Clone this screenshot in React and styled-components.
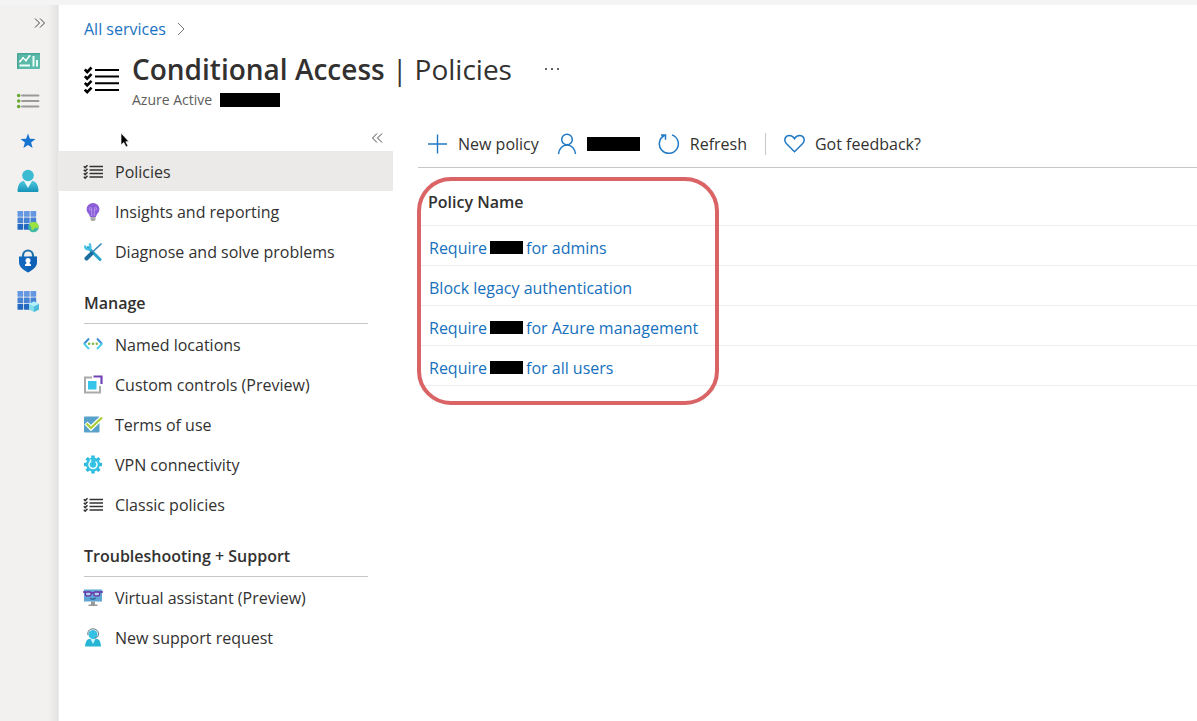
import React from "react";
import styled, { createGlobalStyle } from "styled-components";

const GlobalStyle = createGlobalStyle`
  *, *::before, *::after { box-sizing: border-box; }
  body {
    margin: 0;
    background: #fff;
    color: #323130;
    font-family: "Open Sans", "Noto Sans", sans-serif;
    font-size: 16px;
    line-height: 24px;
  }
  button {
    margin: 0;
    padding: 0;
    border: 0;
    background: none;
    color: inherit;
    font: inherit;
    cursor: pointer;
  }
  a { color: inherit; text-decoration: none; }
  ul { list-style: none; margin: 0; padding: 0; }
  svg { display: block; flex: none; }
`;

const Page = styled.div`
  display: grid;
  grid-template-columns: 59px minmax(0, 1fr);
  min-height: 100vh;
  border-top: 5px solid #f4f4f4;
`;

const Rail = styled.nav`
  display: flex;
  flex-direction: column;
  align-items: center;
  padding: 8px 3px 0 0;
  background: linear-gradient(to right, #f2f1f0 48px, #e4e3e2 58px, #f4f4f4 59px);
`;

const RailToggle = styled.button`
  display: grid;
  place-items: center;
  align-self: flex-end;
  width: 32px;
  height: 20px;
`;

const RailList = styled.ul`
  display: flex;
  flex-direction: column;
  padding-top: 8px;
`;

const RailLink = styled.a`
  display: grid;
  place-items: center;
  width: 40px;
  height: 40px;
`;

const Blade = styled.main`
  min-width: 0;
`;

const Breadcrumb = styled.nav`
  display: flex;
  align-items: center;
  gap: 10px;
  padding: 12px 24px 0 25px;
  color: #1a73c2;
`;

const Header = styled.header`
  display: flex;
  gap: 12px;
  padding: 8px 24px 0 25px;
`;

const HeaderIcon = styled.div`
  padding-top: 13px;
`;

const TitleRow = styled.div`
  display: flex;
  align-items: center;
  gap: 32px;
`;

const Title = styled.h1`
  margin: 0;
  font-size: 28px;
  line-height: 40px;
  font-weight: 400;
  white-space: nowrap;

  strong { font-weight: 600; }
`;

const Subtitle = styled.p`
  display: flex;
  align-items: center;
  gap: 8px;
  margin: 0;
  font-size: 14px;
  line-height: 22px;
  color: #605e5c;
`;

const Redacted = styled.span`
  display: inline-block;
  width: ${(p) => p.$width}px;
  height: ${(p) => p.$height || 14}px;
  background: #000;
`;

const Body = styled.div`
  display: grid;
  grid-template-columns: 334px minmax(0, 1fr);
  column-gap: 25px;
  padding-top: 14px;
`;

const Sidebar = styled.aside`
  min-width: 0;
`;

const CollapseRow = styled.div`
  display: flex;
  justify-content: flex-end;
  height: 26px;
  padding-right: 6px;
`;

const CollapseButton = styled.button`
  display: grid;
  place-items: center;
  width: 20px;
  height: 26px;
`;

const MenuLink = styled.a`
  display: flex;
  align-items: center;
  gap: 12px;
  height: 40px;
  padding: 2px 12px 0 24px;
  background: ${(p) => (p.$active ? "#ebeae8" : "transparent")};
  white-space: nowrap;
`;

const GroupTitle = styled.h2`
  margin: 20px 25px 0;
  padding-bottom: 8px;
  border-bottom: 1px solid #c8c6c4;
  font-size: 16px;
  line-height: 24px;
  font-weight: 600;
`;

const Content = styled.section`
  min-width: 0;
`;

const Toolbar = styled.div`
  display: flex;
  align-items: center;
  height: 43px;
  padding: 0 0 5px 9px;
  border-bottom: 1px solid #c8c6c4;
  gap: 18px;
`;

const ToolButton = styled.button`
  display: flex;
  align-items: center;
  gap: 10px;
  white-space: nowrap;
`;

const Divider = styled.span`
  width: 1px;
  height: 22px;
  background: #c8c6c4;
`;

const TableWrap = styled.div`
  position: relative;
  padding-top: 11px;
`;

const PolicyTable = styled.table`
  width: 100%;
  border-collapse: collapse;
  text-align: left;

  th, td {
    height: 40px;
    padding: 5px 10px 0 11px;
    border-bottom: 1px solid #efeeed;
  }
  th {
    height: 46px;
    padding: 0 10px;
    font-weight: 600;
  }
`;

const PolicyLink = styled.a`
  display: flex;
  align-items: center;
  gap: 3px;
  color: #1670bd;
  white-space: nowrap;
`;

const Highlight = styled.div`
  position: absolute;
  top: 9px;
  bottom: -19px;
  left: -1px;
  width: 302px;
  border: 4px solid #d96365;
  border-radius: 34px;
  pointer-events: none;
`;

const Pointer = styled.svg`
  position: absolute;
  top: 132px;
  left: 120px;
`;

const Chevrons = ({ left }) => (
  <svg width="12" height="12" viewBox="0 0 12 12" fill="none" stroke="#484644" strokeWidth="1">
    {left ? <path d="M6 1.5 1.5 6 6 10.5M11 1.5 6.5 6 11 10.5" /> : <path d="M1 1.5 5.5 6 1 10.5M6 1.5 10.5 6 6 10.5" />}
  </svg>
);

const ChecklistLargeIcon = () => (
  <svg width="36" height="36" viewBox="0 0 36 36" fill="none" stroke="#000">
    <path strokeWidth="2" d="M11 8h24M11 14.600h24M11 21.300h24M11 28h24" />
    <path strokeWidth="2.600" d="m.8 7.500 2.400 2.500 4.300-4.500M.8 14.200l2.400 2.500 4.300-4.500M.8 20.900l2.400 2.500 4.300-4.500M.8 27.600l2.400 2.500 4.300-4.500" />
  </svg>
);

const ChecklistIcon = () => (
  <svg width="20" height="20" viewBox="0 0 20 20" fill="none" stroke="#333">
    <path strokeWidth="1.300" d="M6.500 4.500h13.500M6.500 8h13.500M6.500 11.500h13.500M6.500 15h13.500" />
    <path strokeWidth="1.500" d="m.8 4.200 1.400 1.400 2.300-2.300M.8 7.700l1.400 1.400 2.300-2.300M.8 11.200l1.400 1.400 2.300-2.300M.8 14.700l1.400 1.400 2.300-2.300" />
  </svg>
);

const DashboardIcon = () => (
  <svg width="24" height="18" viewBox="0 0 24 18">
    <rect x="1" y="1" width="23" height="16" rx="1" fill="#5bb9a9" />
    <path d="M1 17V2l1-1h22v1.500H2.500V17z" fill="#48a698" />
    <path d="m4 9.500 3-3.500 3 2.500L13.500 4" fill="none" stroke="#fff" strokeWidth="1.300" />
    <circle cx="4" cy="9.500" r="1" fill="#fff" /><circle cx="7" cy="6" r="1" fill="#fff" /><circle cx="10" cy="8.500" r="1" fill="#fff" /><circle cx="13.500" cy="4" r="1" fill="#fff" />
    <path d="M3.500 13.500H14M17.500 4v10.500M21 8v6.500" stroke="#eafffa" strokeWidth="2" />
  </svg>
);

const ListIcon = () => (
  <svg width="24" height="18" viewBox="0 0 24 18">
    <path d="M6 3.500h16.500M6 9h16.500M6 14.500h16.500" stroke="#999" strokeWidth="1.800" strokeLinecap="round" />
    <g fill="#6ba82e"><circle cx="2.700" cy="3.500" r="1.800" /><circle cx="2.700" cy="9" r="1.800" /><circle cx="2.700" cy="14.500" r="1.800" /></g>
  </svg>
);

const StarIcon = () => (
  <svg width="16" height="16" viewBox="0 0 16 16"><path fill="#1673cf" d="m8 .5 1.900 5.300 5.600.2-4.400 3.500 1.500 5.500L8 11.900 3.400 15l1.500-5.500L.5 6l5.600-.2z" /></svg>
);

const PersonIcon = () => (
  <svg width="22" height="24" viewBox="0 0 22 24">
    <defs><linearGradient id="person" x2="0" y2="1"><stop stopColor="#50c8de" /><stop offset="1" stopColor="#1593b7" /></linearGradient></defs>
    <path fill="url(#person)" d="M.5 21.500c.2-5 2.200-9.200 6-9.500h9c3.800.3 5.800 4.500 6 9.500 0 1-.6 1.500-1.500 1.500H2c-.9 0-1.500-.5-1.500-1.500" />
    <path fill="#eefafd" d="M7 12h8l-4 7z" />
    <circle cx="11" cy="6.500" r="5.800" fill="#3cbad2" />
  </svg>
);

const GridIcon = ({ cube }) => (
  <svg width="22" height="23" viewBox="0 0 22 23">
    {[0, 1, 2].map((r) => [0, 1, 2].map((c) => (
      <rect key={`${r}${c}`} x={c * 6.5 + 0.5} y={r * 6.5 + 1} width="5.700" height="5.700" rx=".4" fill={["#6598e0", "#4683d3", "#2369bf"][r]} />
    )))}
    {cube ? (
      <g><path fill="#83dcee" d="m17 11.500 5 2.500v5.500L17 22l-5-2.500V14z" /><path fill="#b4f0fa" d="m17 11.500 5 2.500-5 2.500-5-2.500z" /><path fill="#4dbbd9" d="M17 16.500 22 14v5.500L17 22z" /></g>
    ) : (
      <g><circle cx="16.500" cy="17" r="5.300" fill="#43b8a4" /><path fill="#9de33f" d="M14 12.500c3-1 6-.3 7.300 2.500.9 2.500-1 4-2.800 2.500-1.500.5-1.500 3.500-4 2-.5-2 .5-2.500-1-3.500-1.500-1-1-2.500.5-3.500" /></g>
    )}
  </svg>
);

const ShieldLockIcon = () => (
  <svg width="20" height="24" viewBox="0 0 20 24">
    <path d="M5 8V6.500a5 5 0 0 1 10 0V8" fill="none" stroke="#2173ac" strokeWidth="2.200" />
    <path fill="#1268bd" d="M1 7.500h18v5.500c0 5.500-5.500 8.500-9 10.500-3.500-2-9-5-9-10.500z" />
    <path fill="#0b55a8" d="M10 7.500h9v5.500c0 5.500-5.500 8.500-9 10.500z" opacity=".35" />
    <circle cx="10" cy="11.500" r="2.500" fill="#fff" /><path fill="#fff" d="M8.800 12h2.400v2l1.800 1.500V17H7v-1.500L8.800 14z" />
  </svg>
);

const BulbIcon = () => (
  <svg width="20" height="20" viewBox="0 0 20 20">
    <path fill="#8b5dd8" d="M10 1a6.300 6.300 0 0 0-6.400 6.200c0 3.500 3 4.600 3.400 7.800h6c.4-3.200 3.400-4.300 3.400-7.800A6.300 6.300 0 0 0 10 1" />
    <path fill="none" stroke="#b996ee" strokeWidth="1" d="M8.700 14V8M11.300 14V8M8.700 8H7.500a1.200 1.200 0 1 1 1.200-1.200zM11.300 8h1.200a1.200 1.200 0 1 0-1.200-1.200z" />
    <path fill="#aaa" d="M7.500 15h5v2.500L11.500 19h-3l-1-1.500z" />
  </svg>
);

const ToolsIcon = () => (
  <svg width="20" height="20" viewBox="0 0 20 20" fill="none">
    <path d="m5 5.500 12 12" stroke="#28a4cd" strokeWidth="3" strokeLinecap="round" />
    <path d="M2 3.500c0 2.500 1 4 3.500 4S8 5 6.500 1.500" stroke="#42c2e3" strokeWidth="2.200" />
    <path d="M18 2 9 10.500" stroke="#3a88b8" strokeWidth="1.700" strokeLinecap="round" />
    <path d="m8.500 11.500-5 5" stroke="#1b6e9f" strokeWidth="4" strokeLinecap="round" />
  </svg>
);

const LocationsIcon = () => (
  <svg width="20" height="20" viewBox="0 0 20 20" fill="none" strokeWidth="2">
    <path d="M6 3.500.9 9M14 3.500 19.100 9" stroke="#3b8fd4" /><path d="M.9 8.500 6 14M19.100 8.500 14 14" stroke="#4fd0ed" />
    <g fill="#83b944"><circle cx="6.200" cy="8.800" r="1.300" /><circle cx="10" cy="8.800" r="1.300" /><circle cx="13.800" cy="8.800" r="1.300" /></g>
  </svg>
);

const ControlsIcon = () => (
  <svg width="20" height="20" viewBox="0 0 20 20" fill="none">
    <path d="M9 2.500H2v15h15V11" stroke="#aaa" strokeWidth="2" /><rect x="5" y="6" width="8.500" height="8.500" fill="#36c5e8" />
    <path d="M10.500 1.500h8V9" stroke="#7344b8" strokeWidth="2.200" />
  </svg>
);

const TermsIcon = () => (
  <svg width="20" height="20" viewBox="0 0 20 20" fill="none">
    <rect x="1" y="1.500" width="15.500" height="16" rx="1" fill="#58a2c9" /><path d="m3 8 5 5L19 2.500" stroke="#fff" strokeWidth="4.500" /><path d="m3.500 8.500 4.500 4.500L19 2.500" stroke="#a8cf37" strokeWidth="2.300" />
  </svg>
);

const GearIcon = () => (
  <svg width="20" height="20" viewBox="0 0 20 20" fill="none">
    <g stroke="#2bb8df" strokeWidth="3.400">{[0, 45, 90, 135].map((a) => <path key={a} d="M10 .5v18" transform={`rotate(${a} 10 9.500)`} />)}</g>
    <circle cx="10" cy="9.500" r="7" fill="#34c1e3" /><path d="M7.500 6.500a4 4 0 1 0 5 0M7.500 4.500v3" stroke="#effcff" strokeWidth="1.500" />
  </svg>
);

const AssistantIcon = () => (
  <svg width="20" height="20" viewBox="0 0 20 20" fill="none">
    <rect x="1" y="1.500" width="18" height="12" fill="#60a5d3" /><path d="M8 13.500h4v3h2.500V18h-9v-1.500H8z" fill="#999" />
    <g stroke="#6931a5" strokeWidth="1.300"><rect x="2.500" y="4" width="5.500" height="3.800" rx="1" fill="#b7d4ee" /><rect x="11" y="4" width="5.500" height="3.800" rx="1" fill="#b7d4ee" /><path d="M0 4h2.500M8 5h3M16.500 4H20" /></g>
    <path d="M7 10.500c2 1 4 1 5.500-.5" stroke="#225694" strokeWidth="1.200" />
  </svg>
);

const SupportIcon = () => (
  <svg width="20" height="20" viewBox="0 0 20 20">
    <path fill="#27b5d6" d="M2 18.500c.4-5 2-7.500 4.500-7.500h7c2.800 0 4.200 2.500 4.500 7.500z" /><path fill="#c8f4ff" d="m7.500 11 2.500 5 2.500-5z" />
    <circle cx="10" cy="6.500" r="4.500" fill="#35c1e4" /><path d="M4.800 7V5.500C5 2.500 7 .8 10 .8s5.500 2 5.500 5-1.500 4-4 4.500" fill="none" stroke="#62777e" strokeWidth="1" />
  </svg>
);

const PlusIcon = () => (
  <svg width="21" height="20" viewBox="0 0 21 20" fill="none" stroke="#2179c4" strokeWidth="1.400"><path d="M10.500.5v19M1 10h19" /></svg>
);
const UserIcon = () => (
  <svg width="20" height="22" viewBox="0 0 20 22" fill="none" stroke="#2179c4" strokeWidth="1.500"><circle cx="10" cy="6.500" r="5.300" /><path d="M1.500 21c.5-5.500 4-9 8.500-9s8 3.500 8.500 9" /></svg>
);
const RefreshIcon = () => (
  <svg width="22" height="22" viewBox="0 0 22 22" fill="none" stroke="#2179c4" strokeWidth="1.500"><path d="M14 1.900a9.500 9.500 0 1 1-7.700.6M3 2h4.500v4.700" /></svg>
);
const HeartIcon = () => (
  <svg width="21" height="19" viewBox="0 0 21 19" fill="none" stroke="#2179c4" strokeWidth="1.500"><path d="M10.500 17.800 2.300 9.600C-.8 5.800 1.500 1.500 5.300 1.500c2.400 0 4 1 5.200 3.200 1.200-2.200 2.800-3.200 5.200-3.200 3.800 0 6.100 4.300 3 8.100z" /></svg>
);

const railItems = [
  ["Dashboard", DashboardIcon],
  ["All services", ListIcon],
  ["Favorites", StarIcon],
  ["Users", PersonIcon],
  ["App services", () => <GridIcon />],
  ["Security", ShieldLockIcon],
  ["All resources", () => <GridIcon cube />],
];

const menuGroups = [
  { items: [["Policies", ChecklistIcon], ["Insights and reporting", BulbIcon], ["Diagnose and solve problems", ToolsIcon]] },
  {
    title: "Manage",
    items: [
      ["Named locations", LocationsIcon],
      ["Custom controls (Preview)", ControlsIcon],
      ["Terms of use", TermsIcon],
      ["VPN connectivity", GearIcon],
      ["Classic policies", ChecklistIcon],
    ],
  },
  { title: "Troubleshooting + Support", items: [["Virtual assistant (Preview)", AssistantIcon], ["New support request", SupportIcon]] },
];

const policies = [["Require", "for admins"], ["Block legacy authentication"], ["Require", "for Azure management"], ["Require", "for all users"]];

export default function App() {
  return (
    <>
      <GlobalStyle />
      <Page>
        <Rail aria-label="Portal">
          <RailToggle aria-label="Expand portal menu"><Chevrons /></RailToggle>
          <RailList>
            {railItems.map(([label, Icon]) => (
              <li key={label}><RailLink href="#" aria-label={label}><Icon /></RailLink></li>
            ))}
          </RailList>
        </Rail>
        <Blade>
          <Breadcrumb aria-label="Breadcrumb">
            <a href="#">All services</a>
            <svg width="10" height="14" viewBox="0 0 10 14" fill="none" stroke="#777"><path d="m2 1 6 6-6 6" /></svg>
          </Breadcrumb>
          <Header>
            <HeaderIcon><ChecklistLargeIcon /></HeaderIcon>
            <div>
              <TitleRow>
                <Title><strong>Conditional Access</strong> | Policies</Title>
                <button aria-label="More actions">
                  <svg width="16" height="4" viewBox="0 0 16 4" fill="#323130"><circle cx="2" cy="2" r="1" /><circle cx="8" cy="2" r="1" /><circle cx="14" cy="2" r="1" /></svg>
                </button>
              </TitleRow>
              <Subtitle>Azure Active <Redacted $width={60} /></Subtitle>
            </div>
          </Header>
          <Body>
            <Sidebar>
              <CollapseRow><CollapseButton aria-label="Collapse menu"><Chevrons left /></CollapseButton></CollapseRow>
              {menuGroups.map((group) => (
                <React.Fragment key={group.title || "main"}>
                  {group.title && <GroupTitle>{group.title}</GroupTitle>}
                  <ul>
                    {group.items.map(([label, Icon]) => (
                      <li key={label}><MenuLink href="#" $active={label === "Policies"}><Icon />{label}</MenuLink></li>
                    ))}
                  </ul>
                </React.Fragment>
              ))}
            </Sidebar>
            <Content>
              <Toolbar>
                <ToolButton><PlusIcon />New policy</ToolButton>
                <ToolButton aria-label="User"><UserIcon /><Redacted $width={53} /></ToolButton>
                <ToolButton><RefreshIcon />Refresh</ToolButton>
                <Divider />
                <ToolButton><HeartIcon />Got feedback?</ToolButton>
              </Toolbar>
              <TableWrap>
                <PolicyTable>
                  <thead><tr><th scope="col">Policy Name</th></tr></thead>
                  <tbody>
                    {policies.map(([start, end]) => (
                      <tr key={start + end}>
                        <td><PolicyLink href="#"><span>{start}</span>{end && <><Redacted $width={33} $height={13} /><span>{end}</span></>}</PolicyLink></td>
                      </tr>
                    ))}
                  </tbody>
                </PolicyTable>
                <Highlight />
              </TableWrap>
            </Content>
          </Body>
        </Blade>
      </Page>
      <Pointer width="10" height="16" viewBox="0 0 10 16" aria-hidden="true"><path d="M1 1v12l2.800-2.500L6 15l2-1-2.200-4.300H9z" fill="#000" stroke="#fff" strokeWidth=".7" /></Pointer>
    </>
  );
}
